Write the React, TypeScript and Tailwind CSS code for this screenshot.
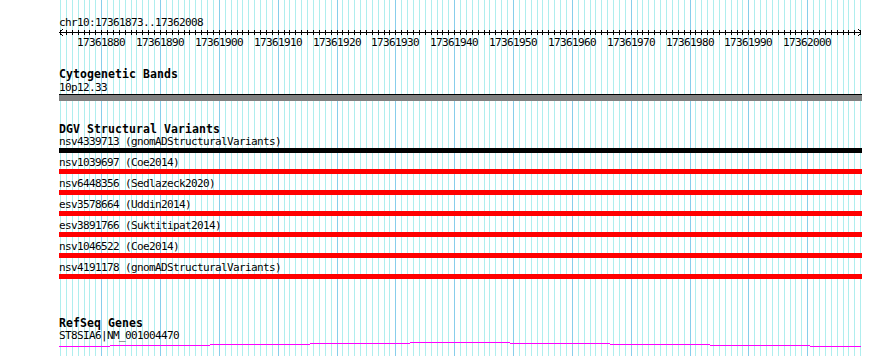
import React from "react";

const S = 5.8835;
const START = 17361873;
const gx = (i: number) => Math.round(60 + i * S);
const N = 137;

const mono = { fontFamily: '"DejaVu Sans Mono", "Liberation Mono", monospace' };

const rows: { label: string; color: string }[] = [
  { label: "nsv4339713 (gnomADStructuralVariants)", color: "bg-black" },
  { label: "nsv1039697 (Coe2014)", color: "bg-[#ff0000]" },
  { label: "nsv6448356 (Sedlazeck2020)", color: "bg-[#ff0000]" },
  { label: "esv3578664 (Uddin2014)", color: "bg-[#ff0000]" },
  { label: "esv3891766 (Suktitipat2014)", color: "bg-[#ff0000]" },
  { label: "nsv1046522 (Coe2014)", color: "bg-[#ff0000]" },
  { label: "nsv4191178 (gnomADStructuralVariants)", color: "bg-[#ff0000]" },
];

function Grid() {
  return (
    <svg
      className="absolute left-0 top-0"
      width={890}
      height={356}
      shapeRendering="crispEdges"
    >
      {Array.from({ length: N }).map((_, i) => {
        const major = (START + i) % 10 === 0;
        return (
          <rect
            key={i}
            x={gx(i)}
            y={0}
            width={1}
            height={356}
            fill={major ? "#87ceeb" : "#afeeee"}
          />
        );
      })}
    </svg>
  );
}

function Ruler() {
  const w = 803;
  const px: [number, number][] = [
    [1, 2], [2, 1], [3, 0], [1, 4], [2, 5], [3, 6],
    [w - 2, 2], [w - 3, 1], [w - 4, 0], [w - 2, 4], [w - 3, 5], [w - 4, 6],
  ];
  return (
    <svg width={w} height={7} shapeRendering="crispEdges" className="block">
      <rect x={0} y={3} width={w - 1} height={1} fill="#000" />
      {Array.from({ length: N }).map((_, i) => (
        <rect key={i} x={gx(i) - 59} y={1} width={1} height={5} fill="#000" />
      ))}
      {px.map(([x, y], k) => (
        <rect key={"a" + k} x={x} y={y} width={1} height={1} fill="#000" />
      ))}
    </svg>
  );
}

function Labels() {
  const labels: { x: number; t: string }[] = [];
  for (let i = 0; i < N; i++) {
    const v = START + i;
    if (v % 10 === 0) labels.push({ x: gx(i) - 59, t: String(v) });
  }
  return (
    <div className="relative h-[13px] w-[803px]">
      {labels.map((l) => (
        <span
          key={l.t}
          className="absolute top-0 text-[11px] leading-[13px] tracking-[-0.62px] text-black whitespace-nowrap"
          style={{ ...mono, left: l.x - 24 }}
        >
          {l.t}
        </span>
      ))}
    </div>
  );
}

function Title({ children, className = "" }: { children: React.ReactNode; className?: string }) {
  return (
    <div
      className={`h-[12px] text-[11.5px] leading-[12px] font-bold tracking-[0.08px] text-black whitespace-nowrap ${className}`}
      style={mono}
    >
      {children}
    </div>
  );
}

function Text({ children, className = "" }: { children: React.ReactNode; className?: string }) {
  return (
    <div
      className={`h-[13px] text-[11px] leading-[13px] tracking-[-0.62px] text-black whitespace-nowrap ${className}`}
      style={mono}
    >
      {children}
    </div>
  );
}

function Hat() {
  const segs: [number, number, number][] = [
    [0, 51, 4],
    [51, 151, 3],
    [151, 251, 2],
    [251, 351, 1],
    [351, 451, 0],
    [451, 551, 1],
    [551, 651, 2],
    [651, 751, 3],
    [751, 802, 4],
  ];
  return (
    <svg width={803} height={5} shapeRendering="crispEdges" className="block">
      {segs.map(([a, b, y], k) => (
        <rect key={k} x={a} y={y} width={b - a} height={1} fill="#ff00ff" />
      ))}
    </svg>
  );
}

export default function App() {
  return (
    <div className="relative w-[890px] h-[356px] overflow-hidden bg-white">
      <Grid />
      <div className="relative flex flex-col pl-[59px]">
        <Text className="mt-[16px]">chr10:17361873..17362008</Text>
        <Ruler />
        <Labels />

        <Title className="mt-[19px]">Cytogenetic Bands</Title>
        <Text className="mt-px">10p12.33</Text>
        <div className="w-[803px] h-[7px] border-t border-black bg-[#808080]" />

        <Title className="mt-[22px]">DGV Structural Variants</Title>
        {rows.map((r, i) => (
          <div key={i} className={i === 0 ? "" : "mt-[3px]"}>
            <Text>{r.label}</Text>
            <div className={`w-[803px] h-[5px] ${r.color}`} />
          </div>
        ))}

        <Title className="mt-[38px]">RefSeq Genes</Title>
        <Text>ST8SIA6|NM_001004470</Text>
        <Hat />
      </div>
    </div>
  );
}
